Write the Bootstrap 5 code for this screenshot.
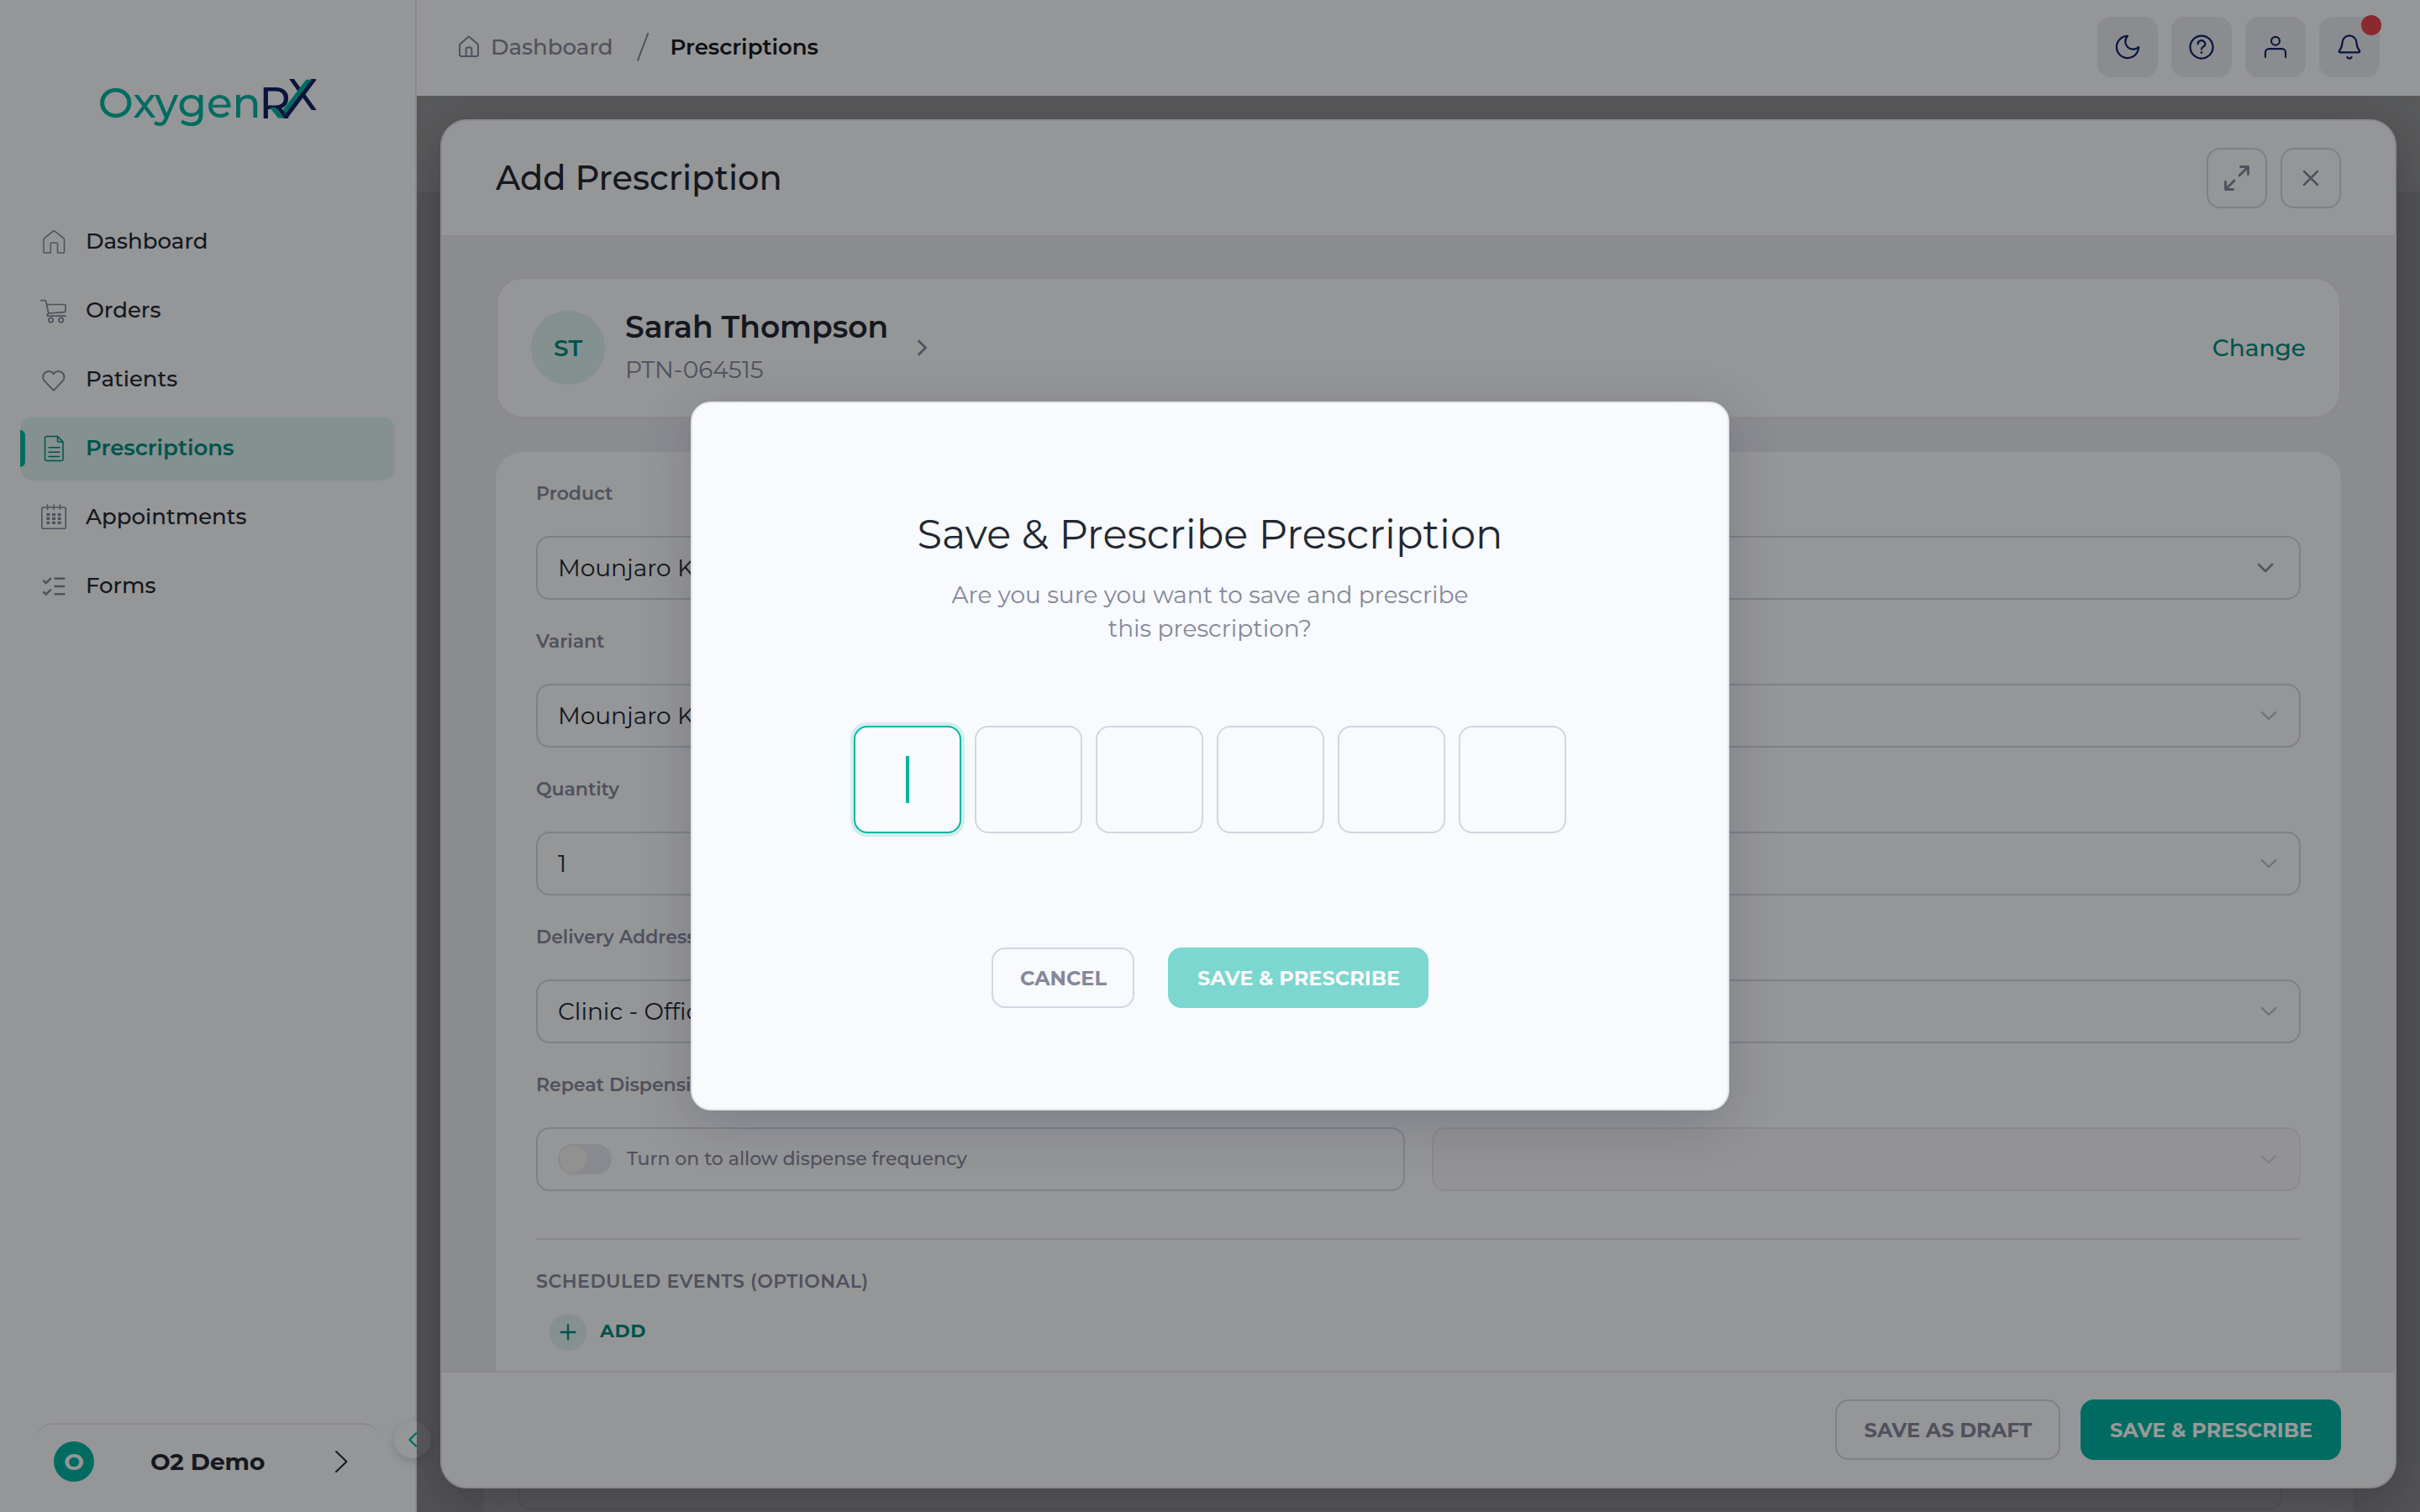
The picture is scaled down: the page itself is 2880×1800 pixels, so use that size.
<!doctype html>
<html lang="en">
<head>
<meta charset="utf-8">
<title>OxygenRX – Prescriptions</title>
<link href="https://cdn.jsdelivr.net/npm/bootstrap@5.3.0/dist/css/bootstrap.min.css" rel="stylesheet">
<style>
:root{--teal:#00b5a2;--teal-dark:#008c7f;--muted:#85879b;--ink:#232833;--navy:#112367;--surface:#f8fafd;--canvas:#e8e9f0;--line:#e6e7ea;--field:#d4d5e2}
html,body{height:1800px;overflow:hidden}
body{font-family:Montserrat,Inter,"Open Sans",sans-serif;font-size:28px;line-height:1.3;color:var(--ink);background:var(--canvas)}
svg{flex:none;fill:none;stroke:currentColor;stroke-linecap:round;stroke-linejoin:round}
.text-muted-2{color:var(--muted)}
.text-teal{color:var(--teal-dark)}

/* sidebar */
.side{width:496px;background:var(--surface);border-right:2px solid var(--line);z-index:1}
.brand-box{height:250px;padding:60px 0 0 100px}
.brand-box svg{overflow:visible}
.brand-box text{stroke:none;font-family:Montserrat,Inter,sans-serif}
.side-nav{gap:6px;padding:0 24px}
.side-link{height:76px;padding-left:24px;gap:22px;border-radius:16px;font-size:26px;font-weight:500;color:var(--ink);text-decoration:none;position:relative}
.side-link svg{color:var(--muted)}
.side-link.current{background:#def0f1;color:var(--teal-dark);font-weight:600}
.side-link.current svg{color:var(--teal-dark)}
.side-link.current::before{content:"";position:absolute;left:0;top:16px;width:6px;height:44px;border-radius:0 8px 8px 0;background:var(--teal)}
.account{margin:auto 40px 0;height:106px;border-top:2px solid var(--line);border-radius:24px 24px 0 0;padding:20px 32px 0 24px}
.account-dot{width:48px;height:48px;background:var(--teal);color:var(--surface);font-weight:700}
.account-name{margin-left:67px;font-weight:700}
.collapse-btn{position:absolute;left:469px;top:1692px;width:44px;height:44px;background:var(--surface);box-shadow:0 4px 12px rgba(30,34,60,.16);color:var(--teal)}

/* top bar */
.topbar{height:114px;background:var(--surface);padding:0 48px;font-size:26px;font-weight:500;padding-bottom:2px}
.topbar .here{font-weight:600;color:#181c26}
.crumb-home{margin-left:12px}
.crumb-text{padding-top:2px}
.crumb-slash{margin:0 25px 0 27px}
.tool{width:72px;height:72px;border-radius:16px;background:var(--canvas);color:var(--navy);position:relative}
.alert-dot{position:absolute;left:50px;top:-2px;width:24px;height:24px;background:#e64550}
.page-strip{height:114px;background:var(--surface)}
.page-card{margin:0 80px;background:var(--surface);height:1572px;padding:0 84px 0 40px}
.page-card-in{height:1570px;border:2px solid var(--line);border-radius:16px}

/* drawer over the page */
.scrim{position:absolute;inset:0;background:rgba(0,0,0,.4);overflow:hidden;padding:28px}
.sheet{height:100%;border:2px solid var(--line);border-radius:32px;background:var(--canvas);overflow:hidden}
.sheet-wrap{height:100%;border-radius:32px;box-shadow:0 16px 64px rgba(30,34,60,.32)}
.sheet-head{height:138px;background:var(--surface);border-bottom:2px solid var(--line);padding:0 64px}
.sheet-title{font-size:40px;font-weight:500}
.icon-btn{width:72px;height:72px;border:2px solid var(--field);border-radius:16px;color:var(--muted)}
.sheet-body{padding:48px 64px 0;min-height:0;overflow:hidden}
.patient{height:168px;border:2px solid var(--line);border-radius:32px;background:var(--surface);padding:0 40px}
.initials{width:88px;height:88px;background:#def0f1;font-weight:600}
.patient-name{font-size:36px;line-height:52px;font-weight:600}
.patient-id{line-height:50px}
.patient-go{margin-left:29px}
.change-link{font-weight:500}
.form-box{margin-top:40px;background:var(--surface);border-radius:32px 32px 0 0;padding:36px 48px 0;height:1200px}
.field-label{height:28px;line-height:28px;margin-bottom:36px;font-size:22px;font-weight:600;color:var(--muted);display:block}
.field{height:76px;border:2px solid var(--field);border-radius:16px;padding:0 26px 0 24px;margin-bottom:36px}
.field svg{color:#bbbccb}
.field .strong-caret{color:#8e8f92;margin-right:4px}
.field.off{background:#f5f6f8;border-color:#e7e8ec}
.field.off svg{color:#d5d6e0}
.field-row{gap:32px}
.field-row .field{flex:1 1 0;margin-bottom:0}
.pill{width:64px;height:36px;border-radius:18px;background:#e5e6ee;padding:2px}
.pill-knob{width:32px;height:32px;background:#f2f2f0}
.pill-text{font-size:22px;font-weight:500;color:var(--muted);margin-left:18px;padding-top:1px}
.rule{height:2px;background:#e6e7ea;margin-top:56px}
.caps{margin-top:36px;height:28px;line-height:28px;font-size:22px;font-weight:600;letter-spacing:.55px;color:var(--muted)}
.add-row{margin-top:24px;padding-left:16px;gap:16px;font-size:22px;font-weight:700;letter-spacing:.6px}
.add-text{padding-bottom:2px}
.add-dot{width:44px;height:44px;background:#def0f1}
.sheet-foot{height:138px;border-top:2px solid var(--line);background:var(--surface);padding:0 64px;gap:24px}
.act{height:72px;border-radius:16px;font-size:24px;font-weight:700;padding:1px 0 0 1px}
.act-line{border:2px solid var(--field);color:var(--muted)}
.act-fill{background:var(--teal);color:#fff;border:0}
.w-draft{width:268px}.w-save{width:310px}.w-cancel{width:170px}

/* confirmation dialog */
.veil{position:absolute;inset:0;background:rgba(0,0,0,.4);z-index:10}
.confirm{width:1236px;height:844px;background:var(--surface);border:2px solid #e5e6ec;border-radius:24px;box-shadow:0 16px 64px rgba(30,34,72,.2);padding-top:126px}
.confirm-title{font-size:48px;line-height:60px;font-weight:400}
.confirm-text{width:640px;line-height:40px;margin:22px 0 96px;color:var(--muted)}
.otp{gap:16px;margin-bottom:136px}
.otp-cell{width:128px;height:128px;border:2px solid var(--field);border-radius:16px}
.otp-cell.focus{border-color:var(--teal);box-shadow:0 0 0 4px rgba(0,181,162,.17)}
.otp-caret{width:4px;height:56px;background:var(--teal)}
.confirm-acts{gap:40px}
</style>
<script src="https://cdn.jsdelivr.net/npm/bootstrap@5.3.0/dist/js/bootstrap.bundle.min.js"></script>
</head>
<body class="d-flex position-relative">

<aside class="side d-flex flex-column flex-shrink-0 position-relative">
  <div class="brand-box">
    <svg width="300" height="110" viewBox="100 60 300 110">
      <text x="116.8" y="140.3" font-size="50" font-weight="500" fill="#00b5a2">Oxygen</text>
      <text x="308.3" y="140.6" font-size="52" font-weight="500" fill="#112367">R</text>
      <text x="342.4" y="131" font-size="52" font-weight="500" fill="#112367">X</text>
      <g stroke="none"><path d="M370.700 94.700h6L342.300 140.600h-7z" fill="#112367"/><path d="M321 128h7l10.600 12.600h-7.600z" fill="#00b5a2"/><path d="M364.300 94.700h6.500L338 137.600l-3-4.500z" fill="#00b5a2"/><path d="M328 128l6 0l5 6.500l-1 3z" fill="#112367"/></g>
    </svg>
  </div>
  <nav class="side-nav d-flex flex-column">
    <a class="side-link d-flex align-items-center" href="#"><svg width="32" height="32" stroke-width="1.500"><path d="M4 13.200q0-.9.7-1.500L15 3.300q1.200-.9 2.400 0L27.800 11.700q.7.600.7 1.500V28q0 1-1 1h-7V18q0-1-1-1h-6.200q-1 0-1 1v11H5q-1 0-1-1z"/></svg>Dashboard</a>
    <a class="side-link d-flex align-items-center" href="#"><svg width="32" height="32" stroke-width="1.700"><path d="M.8 3.700H5q1.400 0 1.800 1.300L9.800 19.300M7.500 8.500H28.500q1.500 0 1.500 1.500v6q0 1.500-1.500 1.600L9.500 19q-1.800.8-1 3.200H30"/><circle cx="12.500" cy="27" r="2.700"/><circle cx="24.700" cy="27" r="2.700"/></svg>Orders</a>
    <a class="side-link d-flex align-items-center" href="#"><svg width="32" height="32" stroke-width="1.900"><path d="M15.800 28.800L4.700 17.200a6.900 6.900 0 0 1 9.700-9.700L15.800 9.200l1.400-1.700a6.900 6.900 0 0 1 9.700 9.700z"/></svg>Patients</a>
    <a class="side-link current d-flex align-items-center" href="#"><svg width="32" height="32" stroke-width="1.500"><path d="M20.500 1.500H7.500q-2 0-2 2V28.500q0 2 2 2H25q2 0 2-2V8zM20.500 1.500V7q0 1 1 1H27M10 14.700h12.700M10 20.200h12.700M10 25.500h12.700"/></svg>Prescriptions</a>
    <a class="side-link d-flex align-items-center" href="#"><svg width="32" height="32" stroke-width="1.600"><rect x="1.800" y="4" width="28.400" height="25.200" rx="1.200"/><path d="M8.500 1v5.500M16 1v5.500M23.400 1v5.500"/><g stroke="none" fill="currentColor"><path d="M7.300 11h4v3.200h-4zM14 11h4v3.200h-4zM20.600 11h4v3.200h-4zM7.300 15.800h4V19h-4zM14 15.800h4V19h-4zM20.600 15.800h4V19h-4zM7.300 20.800h4V24h-4zM14 20.800h4V24h-4zM20.600 20.800h4V24h-4z"/></g></svg>Appointments</a>
    <a class="side-link d-flex align-items-center" href="#"><svg width="32" height="32" stroke-width="2.500"><path d="M4 9.500l2.800 2.600L12 6.800M4 23l2.800 2.600L12 20.300M17.500 6.700h10.800M17.500 16h10.800M17.500 25.300h10.800"/></svg>Forms</a>
  </nav>
  <div class="account d-flex align-items-start">
    <div class="d-flex align-items-center w-100">
      <span class="account-dot rounded-circle d-flex align-items-center justify-content-center">O</span>
      <span class="account-name">O2 Demo</span>
      <svg class="ms-auto" width="32" height="32" stroke-width="2"><path d="M10 4l12.500 12L10 28"/></svg>
    </div>
  </div>
  <div class="collapse-btn rounded-circle d-flex align-items-center justify-content-center"><svg width="20" height="20" stroke-width="2.400"><path d="M14 2.500L6.500 10l7.500 7.500"/></svg></div>
</aside>

<main class="flex-grow-1 d-flex flex-column">
  <header class="topbar d-flex align-items-center justify-content-between flex-shrink-0">
    <div class="d-flex align-items-center">
      <svg class="text-muted-2" width="28" height="28" stroke-width="2"><path d="M3 12.200q0-1.200.8-2L12.700 2.400q1.300-1.100 2.600 0l8.900 7.800q.8.800.8 2V23q0 2-2 2H5q-2 0-2-2zM10.700 25v-8.800q0-1.700 1.700-1.700h3.200q1.700 0 1.700 1.700V25"/></svg>
      <span class="crumb-home crumb-text text-muted-2">Dashboard</span>
      <svg class="crumb-slash text-muted-2" width="16" height="36" stroke-width="2"><path d="M14 2L2 34"/></svg>
      <span class="here crumb-text">Prescriptions</span>
    </div>
    <div class="d-flex gap-3">
      <div class="tool d-flex align-items-center justify-content-center"><svg width="36" height="36" viewBox="0 0 24 24" stroke-width="1.500"><path d="M12 3.300a6 6 0 0 0 8.700 8.700A8.700 8.700 0 1 1 12 3.300z"/></svg></div>
      <div class="tool d-flex align-items-center justify-content-center"><svg width="36" height="36" viewBox="0 0 24 24" stroke-width="1.500"><circle cx="12" cy="12" r="9"/><path d="M9.100 9.500a2.900 2.600 0 1 1 4.500 2.100c-1 .6-1.600 1-1.600 2.100"/><circle cx="12" cy="16.400" r=".9" fill="currentColor" stroke="none"/></svg></div>
      <div class="tool d-flex align-items-center justify-content-center"><svg width="36" height="36" viewBox="0 0 24 24" stroke-width="1.400" stroke-linecap="butt"><circle cx="12" cy="7.200" r="3.300"/><path d="M4 20v-3.800a2.800 2.800 0 0 1 2.800-2.800h10.400a2.800 2.800 0 0 1 2.800 2.800V20"/></svg></div>
      <div class="tool d-flex align-items-center justify-content-center"><svg width="36" height="36" viewBox="0 0 24 24" stroke-width="1.500"><path d="M12 3a5.600 5.600 0 0 0-5.600 5.300c-.2 4-.9 4.600-2.300 6.500-.5.700-.1 1.500.8 1.500h14.200c.9 0 1.300-.8.800-1.500-1.400-1.900-2.100-2.500-2.300-6.500A5.600 5.600 0 0 0 12 3zM10.300 20a1.900 1.900 0 0 0 3.400 0"/></svg><span class="alert-dot rounded-circle"></span></div>
    </div>
  </header>

  <section class="flex-grow-1 position-relative overflow-hidden z-2">
    <div class="page-strip"></div>
    <div class="page-card"><div class="page-card-in"></div></div>
    <div class="scrim">
      <div class="sheet-wrap">
      <div class="sheet d-flex flex-column">
        <div class="sheet-head d-flex align-items-center justify-content-between flex-shrink-0">
          <span class="sheet-title">Add Prescription</span>
          <div class="d-flex gap-3">
            <span class="icon-btn d-flex align-items-center justify-content-center"><svg width="36" height="36" viewBox="0 0 24 24" stroke-width="1.900"><path d="M15 3h6v6M21 3l-7 7M9 21H3v-6M3 21l7-7"/></svg></span>
            <span class="icon-btn d-flex align-items-center justify-content-center"><svg width="20" height="20" stroke-width="2.500"><path d="M2 2l16 16M18 2L2 18"/></svg></span>
          </div>
        </div>
        <div class="sheet-body flex-grow-1">
          <div class="patient d-flex align-items-center">
            <span class="initials text-teal rounded-circle d-flex align-items-center justify-content-center">ST</span>
            <div class="ms-4">
              <div class="patient-name">Sarah Thompson</div>
              <div class="patient-id text-muted-2">PTN-064515</div>
            </div>
            <svg class="patient-go text-muted-2" width="24" height="24" stroke-width="2.500"><path d="M7.500 4l8 8-8 8"/></svg>
            <span class="change-link ms-auto text-teal">Change</span>
          </div>
          <div class="form-box">
            <label class="field-label">Product</label>
            <div class="field d-flex align-items-center justify-content-between"><span>Mounjaro KwikPen</span><svg class="strong-caret" width="20" height="20" stroke-width="2.600"><path d="M2 6l8 8 8-8"/></svg></div>
            <label class="field-label">Variant</label>
            <div class="field d-flex align-items-center justify-content-between"><span>Mounjaro KwikPen</span><svg width="20" height="20" stroke-width="2.400"><path d="M1.800 6L10 14l8.200-8"/></svg></div>
            <label class="field-label">Quantity</label>
            <div class="field d-flex align-items-center justify-content-between"><span>1</span><svg width="20" height="20" stroke-width="2.400"><path d="M1.800 6L10 14l8.200-8"/></svg></div>
            <label class="field-label">Delivery Address</label>
            <div class="field d-flex align-items-center justify-content-between"><span>Clinic - Office</span><svg width="20" height="20" stroke-width="2.400"><path d="M1.800 6L10 14l8.200-8"/></svg></div>
            <label class="field-label">Repeat Dispensing</label>
            <div class="field-row d-flex">
              <div class="field d-flex align-items-center"><span class="pill"><span class="pill-knob rounded-circle d-block"></span></span><span class="pill-text">Turn on to allow dispense frequency</span></div>
              <div class="field off d-flex align-items-center justify-content-end"><svg width="20" height="20" stroke-width="2.400"><path d="M1.800 6L10 14l8.200-8"/></svg></div>
            </div>
            <div class="rule"></div>
            <div class="caps">SCHEDULED EVENTS (OPTIONAL)</div>
            <div class="add-row text-teal d-flex align-items-center"><span class="add-dot rounded-circle d-flex align-items-center justify-content-center"><svg width="22" height="22" stroke-width="2.300"><path d="M11 2.500v17M2.500 11h17"/></svg></span><span class="add-text">ADD</span></div>
          </div>
        </div>
        <div class="sheet-foot d-flex align-items-center justify-content-end flex-shrink-0">
          <button class="btn act act-line w-draft">SAVE AS DRAFT</button>
          <button class="btn act act-fill w-save">SAVE &amp; PRESCRIBE</button>
        </div>
      </div>
      </div>
    </div>
  </section>
</main>

<div class="veil d-flex align-items-center justify-content-center">
  <div class="confirm d-flex flex-column align-items-center text-center">
    <div class="confirm-title">Save &amp; Prescribe Prescription</div>
    <div class="confirm-text">Are you sure you want to save and prescribe this prescription?</div>
    <div class="otp d-flex">
      <span class="otp-cell focus d-flex align-items-center justify-content-center"><span class="otp-caret"></span></span>
      <span class="otp-cell"></span><span class="otp-cell"></span><span class="otp-cell"></span><span class="otp-cell"></span><span class="otp-cell"></span>
    </div>
    <div class="confirm-acts d-flex">
      <button class="btn act act-line w-cancel">CANCEL</button>
      <button class="btn act act-fill w-save opacity-50">SAVE &amp; PRESCRIBE</button>
    </div>
  </div>
</div>
</body>
</html>
